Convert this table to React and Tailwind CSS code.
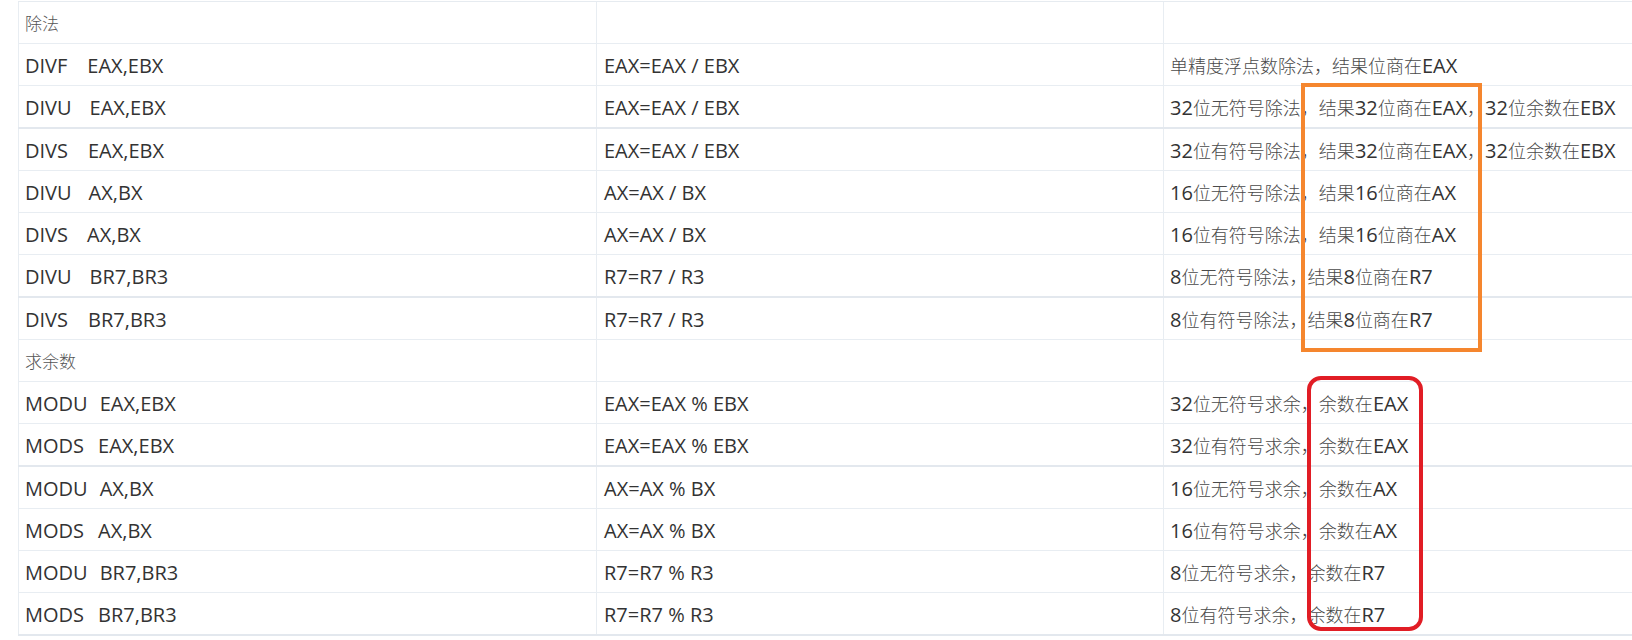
import React from "react";

const rows = [
  { head: "除法" },
  { op: "DIVF", arg: "EAX,EBX", gap: "ml-[20px]", expr: "EAX=EAX / EBX", desc: "单精度浮点数除法，结果位商在EAX" },
  { op: "DIVU", arg: "EAX,EBX", gap: "ml-[18px]", expr: "EAX=EAX / EBX", desc: "32位无符号除法，结果32位商在EAX，32位余数在EBX", thick: true },
  { op: "DIVS", arg: "EAX,EBX", gap: "ml-[20px]", expr: "EAX=EAX / EBX", desc: "32位有符号除法，结果32位商在EAX，32位余数在EBX" },
  { op: "DIVU", arg: "AX,BX", gap: "ml-[17px]", expr: "AX=AX / BX", desc: "16位无符号除法，结果16位商在AX" },
  { op: "DIVS", arg: "AX,BX", gap: "ml-[19px]", expr: "AX=AX / BX", desc: "16位有符号除法，结果16位商在AX" },
  { op: "DIVU", arg: "BR7,BR3", gap: "ml-[18px]", expr: "R7=R7 / R3", desc: "8位无符号除法，结果8位商在R7", thick: true },
  { op: "DIVS", arg: "BR7,BR3", gap: "ml-[20px]", expr: "R7=R7 / R3", desc: "8位有符号除法，结果8位商在R7" },
  { head: "求余数" },
  { op: "MODU", arg: "EAX,EBX", gap: "ml-[12px]", expr: "EAX=EAX % EBX", desc: "32位无符号求余，余数在EAX" },
  { op: "MODS", arg: "EAX,EBX", gap: "ml-[14px]", expr: "EAX=EAX % EBX", desc: "32位有符号求余，余数在EAX", thick: true },
  { op: "MODU", arg: "AX,BX", gap: "ml-[12px]", expr: "AX=AX % BX", desc: "16位无符号求余，余数在AX" },
  { op: "MODS", arg: "AX,BX", gap: "ml-[14px]", expr: "AX=AX % BX", desc: "16位有符号求余，余数在AX" },
  { op: "MODU", arg: "BR7,BR3", gap: "ml-[12px]", expr: "R7=R7 % R3", desc: "8位无符号求余，余数在R7" },
  { op: "MODS", arg: "BR7,BR3", gap: "ml-[14px]", expr: "R7=R7 % R3", desc: "8位有符号求余，余数在R7", thick: true },
];

function Mixed({ text }) {
  const parts = text.split(/([\u3000-\u9fff\uff00-\uffef]+)/).filter(Boolean);
  return (
    <span>
      {parts.map((p, i) =>
        /[\u3000-\u9fff\uff00-\uffef]/.test(p) ? (
          <span key={i} className="text-[18px] font-light text-[#4a4a4a]">
            {p}
          </span>
        ) : (
          <span key={i}>{p}</span>
        )
      )}
    </span>
  );
}

export default function App() {
  return (
    <div
      className="relative w-[1632px] h-[640px] overflow-hidden bg-white pl-[18px] pt-[1px] text-[20px] text-[#333]"
      style={{ fontFamily: '"Open Sans", "Noto Sans CJK SC", sans-serif' }}
    >
      <div className="border-t border-[#e6ebf0]">
        {rows.map((r, i) => (
          <div
            key={i}
            className={
              r.thick
                ? "grid grid-cols-[578px_567px_1fr] h-[43px] border-b-2 border-[#e3e8ee]"
                : "grid grid-cols-[578px_567px_1fr] h-[42px] border-b border-[#e8edf2]"
            }
          >
            <div className="flex items-center border-l border-[#e8edf2] pl-[6px] pt-[2px] whitespace-nowrap">
              {r.head ? (
                <span className="text-[17px] font-light text-[#555]">{r.head}</span>
              ) : (
                <>
                  <span>{r.op}</span>
                  <span className={r.gap}>{r.arg}</span>
                </>
              )}
            </div>
            <div className="flex items-center border-l border-[#e8edf2] pl-[7px] pt-[2px] whitespace-nowrap">
              {r.expr || ""}
            </div>
            <div className="flex items-center border-l border-[#e8edf2] pl-[6px] pt-[2px] whitespace-nowrap">
              {r.desc ? <Mixed text={r.desc} /> : ""}
            </div>
          </div>
        ))}
      </div>

      <div className="absolute left-[1301px] top-[83px] w-[181px] h-[269px] border-4 border-[#f5862e]" />
      <div className="absolute left-[1307px] top-[376px] w-[116px] h-[255px] border-4 border-[#e11d25] rounded-[14px]" />
    </div>
  );
}
